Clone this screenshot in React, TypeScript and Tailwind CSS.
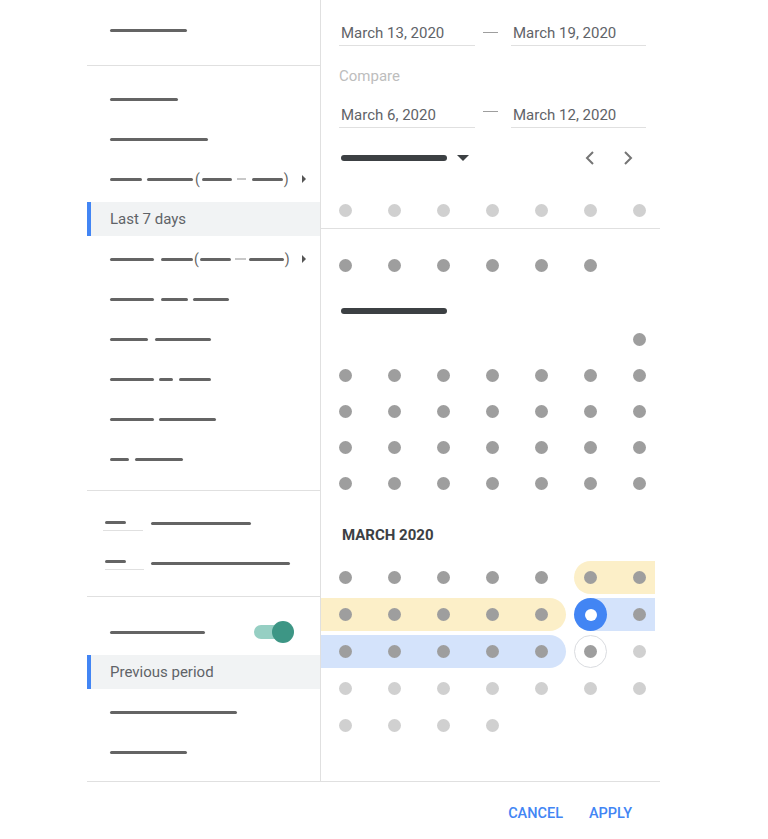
import React from "react";

type Kind = "dark" | "light" | "none" | "selected" | "today";

const yellow = "bg-[#fcefc8]";
const blue = "bg-[#d4e3fb]";

function Bar({ w }: { w: string }) {
  return <span className={`block h-[3px] shrink-0 rounded-full bg-[#646464] ${w}`} />;
}

function Paren({ children, cls = "" }: { children: React.ReactNode; cls?: string }) {
  return <span className={`text-[14px] leading-none text-[#646464] ${cls}`}>{children}</span>;
}

function Dash({ cls }: { cls: string }) {
  return <span className={`block h-[2px] shrink-0 bg-[#c8c8c8] ${cls}`} />;
}

function Arrow() {
  return (
    <span className="ml-auto block h-0 w-0 border-y-[4px] border-l-[4px] border-y-transparent border-l-[#555]" />
  );
}

function Row({ children, cls = "" }: { children: React.ReactNode; cls?: string }) {
  return <div className={`flex h-10 items-center pl-[23px] pr-[14px] ${cls}`}>{children}</div>;
}

function Selected({ label }: { label: string }) {
  return (
    <div className="my-[3px] flex h-[34px] items-center border-l-[4px] border-[#4285f4] bg-[#f1f3f4] pl-[19px] text-[15px] text-[#5f6368]">
      {label}
    </div>
  );
}

function DateField({ label, w }: { label: string; w: string }) {
  return (
    <div
      className={`flex h-[24px] items-center border-b border-[#e0e0e0] pl-[2px] text-[15px] text-[#5f6368] ${w}`}
    >
      {label}
    </div>
  );
}

function Cell({ kind = "dark", band }: { kind?: Kind; band?: string }) {
  return (
    <div className="relative flex h-full items-center justify-center">
      {band && <span className={`absolute inset-y-[2px] ${band}`} />}
      {kind === "dark" && <span className="relative h-[13px] w-[13px] rounded-full bg-[#9e9e9e]" />}
      {kind === "light" && <span className="relative h-[13px] w-[13px] rounded-full bg-[#d0d0d0]" />}
      {kind === "selected" && (
        <span className="relative flex h-[33px] w-[33px] items-center justify-center rounded-full bg-[#4285f4]">
          <span className="h-[12px] w-[12px] rounded-full bg-white" />
        </span>
      )}
      {kind === "today" && (
        <span className="relative flex h-[33px] w-[33px] items-center justify-center rounded-full border border-[#dadce0] bg-white">
          <span className="h-[13px] w-[13px] rounded-full bg-[#9e9e9e]" />
        </span>
      )}
    </div>
  );
}

function Week({ cells, h = "h-[36px]" }: { cells: { kind?: Kind; band?: string }[]; h?: string }) {
  return (
    <div className={`grid grid-cols-[repeat(7,49px)] ${h}`}>
      {cells.map((c, i) => (
        <Cell key={i} kind={c.kind} band={c.band} />
      ))}
    </div>
  );
}

const full = (kind: Kind) => Array.from({ length: 7 }, () => ({ kind }));

function Chevron({ dir }: { dir: "left" | "right" }) {
  return (
    <svg width="12" height="14" viewBox="0 0 12 14" fill="none" stroke="#757575" strokeWidth="2">
      {dir === "left" ? <polyline points="9,1 3,7 9,13" /> : <polyline points="3,1 9,7 3,13" />}
    </svg>
  );
}

export default function App() {
  return (
    <div className="min-h-[839px] bg-white font-[Roboto,Arial,sans-serif]">
      <div className="ml-[87px] w-[573px]">
        <div className="flex">
          {/* presets */}
          <aside className="w-[234px] shrink-0 border-r border-[#e0e0e0]">
            <div className="h-[66px] border-b border-[#e0e0e0] pt-[10px]">
              <Row cls="pl-[22px]">
                <Bar w="w-[77px]" />
              </Row>
            </div>

            <div className="h-[425px] border-b border-[#e0e0e0] pt-[13px]">
              <Row>
                <Bar w="w-[68px]" />
              </Row>
              <Row>
                <Bar w="w-[98px]" />
              </Row>
              <Row>
                <Bar w="w-[32px]" />
                <Bar w="w-[46px] ml-[5px]" />
                <Paren cls="ml-[2px]">(</Paren>
                <Bar w="w-[30px] ml-[2px]" />
                <Dash cls="w-[9px] ml-[5px]" />
                <Bar w="w-[31px] ml-[6px]" />
                <Paren cls="ml-[1px]">)</Paren>
                <Arrow />
              </Row>
              <Selected label="Last 7 days" />
              <Row>
                <Bar w="w-[44px]" />
                <Bar w="w-[32px] ml-[7px]" />
                <Paren cls="ml-[1px]">(</Paren>
                <Bar w="w-[31px] ml-[1px]" />
                <Dash cls="w-[11px] ml-[4px]" />
                <Bar w="w-[35px] ml-[3px]" />
                <Paren cls="ml-[1px]">)</Paren>
                <Arrow />
              </Row>
              <Row>
                <Bar w="w-[44px]" />
                <Bar w="w-[27px] ml-[7px]" />
                <Bar w="w-[36px] ml-[5px]" />
              </Row>
              <Row>
                <Bar w="w-[38px]" />
                <Bar w="w-[56px] ml-[7px]" />
              </Row>
              <Row>
                <Bar w="w-[44px]" />
                <Bar w="w-[14px] ml-[5px]" />
                <Bar w="w-[32px] ml-[6px]" />
              </Row>
              <Row>
                <Bar w="w-[44px]" />
                <Bar w="w-[57px] ml-[5px]" />
              </Row>
              <Row>
                <Bar w="w-[19px]" />
                <Bar w="w-[48px] ml-[6px]" />
              </Row>
            </div>

            <div className="h-[106px] border-b border-[#e0e0e0] pt-[12px]">
              <div className="flex h-10 items-center pl-[16px]">
                <div className="w-[40px] border-b border-[#e0e0e0] py-[6px] pl-[2px]">
                  <Bar w="w-[21px]" />
                </div>
                <Bar w="w-[100px] ml-[8px]" />
              </div>
              <div className="flex h-10 items-center pl-[18px]">
                <div className="w-[39px] border-b border-[#e0e0e0] pb-[6px] pt-[4px]">
                  <Bar w="w-[21px]" />
                </div>
                <Bar w="w-[139px] ml-[7px]" />
              </div>
            </div>

            <div className="h-[184px] pt-[15px]">
              <Row>
                <Bar w="w-[95px]" />
                <div className="relative ml-[49px] h-[14px] w-[38px] rounded-full bg-[#96cfc3]">
                  <span className="absolute -right-[2px] -top-[4px] h-[22px] w-[22px] rounded-full bg-[#3d9685]" />
                </div>
              </Row>
              <Selected label="Previous period" />
              <Row>
                <Bar w="w-[127px]" />
              </Row>
              <Row>
                <Bar w="w-[77px]" />
              </Row>
            </div>
          </aside>

          {/* calendar */}
          <section className="w-[339px]">
            <div className="pl-[18px] pt-[22px]">
              <div className="flex items-start">
                <DateField label="March 13, 2020" w="w-[136px]" />
                <span className="ml-[8px] mr-[13px] mt-[10px] block h-px w-[15px] bg-[#9e9e9e]" />
                <DateField label="March 19, 2020" w="w-[135px]" />
              </div>
              <div className="mt-[20px] h-[20px] text-[15px] leading-[20px] text-[#bdbdbd]">Compare</div>
              <div className="mt-[18px] flex items-start">
                <DateField label="March 6, 2020" w="w-[136px]" />
                <span className="ml-[8px] mr-[13px] mt-[7px] block h-px w-[15px] bg-[#9e9e9e]" />
                <DateField label="March 12, 2020" w="w-[135px]" />
              </div>
            </div>

            <div className="mt-[18px] flex h-[24px] items-center pl-[20px] pr-[26px]">
              <span className="block h-[6px] w-[106px] rounded-full bg-[#3c4043]" />
              <span className="ml-[10px] block h-0 w-0 border-x-[6px] border-t-[6px] border-x-transparent border-t-[#3c4043]" />
              <div className="ml-auto flex items-center gap-[26px]">
                <Chevron dir="left" />
                <Chevron dir="right" />
              </div>
            </div>

            <div className="mt-[22px] h-[37px] border-b border-[#e0e0e0]">
              <div className="w-[334px] overflow-hidden">
                <Week cells={full("light")} />
              </div>
            </div>

            <div className="w-[334px] overflow-hidden pt-[18px]">
              <Week cells={[...Array.from({ length: 6 }, () => ({ kind: "dark" as Kind })), { kind: "none" }]} />
              <div className="flex h-[38px] items-end pb-[7px] pl-[20px]">
                <span className="block h-[6px] w-[106px] rounded-full bg-[#3c4043]" />
              </div>
              <Week cells={[...Array.from({ length: 6 }, () => ({ kind: "none" as Kind })), { kind: "dark" }]} />
              <Week cells={full("dark")} />
              <Week cells={full("dark")} />
              <Week cells={full("dark")} />
              <Week cells={full("dark")} />

              <div className="pb-[14px] pl-[21px] pt-[24px] text-[15px] font-bold leading-[20px] text-[#3c4043]">
                MARCH 2020
              </div>

              <Week
                h="h-[37px]"
                cells={[
                  { kind: "dark" },
                  { kind: "dark" },
                  { kind: "dark" },
                  { kind: "dark" },
                  { kind: "dark" },
                  { kind: "dark", band: `left-[8px] right-0 rounded-l-full ${yellow}` },
                  { kind: "dark", band: `inset-x-0 ${yellow}` },
                ]}
              />
              <Week
                h="h-[37px]"
                cells={[
                  { kind: "dark", band: `inset-x-0 ${yellow}` },
                  { kind: "dark", band: `inset-x-0 ${yellow}` },
                  { kind: "dark", band: `inset-x-0 ${yellow}` },
                  { kind: "dark", band: `inset-x-0 ${yellow}` },
                  { kind: "dark", band: `inset-x-0 rounded-r-full ${yellow}` },
                  { kind: "selected", band: `left-1/2 right-0 ${blue}` },
                  { kind: "dark", band: `inset-x-0 ${blue}` },
                ]}
              />
              <Week
                h="h-[37px]"
                cells={[
                  { kind: "dark", band: `inset-x-0 ${blue}` },
                  { kind: "dark", band: `inset-x-0 ${blue}` },
                  { kind: "dark", band: `inset-x-0 ${blue}` },
                  { kind: "dark", band: `inset-x-0 ${blue}` },
                  { kind: "dark", band: `inset-x-0 rounded-r-full ${blue}` },
                  { kind: "today" },
                  { kind: "light" },
                ]}
              />
              <Week h="h-[37px]" cells={full("light")} />
              <Week
                h="h-[37px]"
                cells={[
                  ...Array.from({ length: 4 }, () => ({ kind: "light" as Kind })),
                  { kind: "none" },
                  { kind: "none" },
                  { kind: "none" },
                ]}
              />
            </div>
          </section>
        </div>

        <footer className="flex h-[58px] items-start justify-end gap-[26px] border-t border-[#e0e0e0] pr-[28px] pt-[22px] text-[14.5px] font-medium leading-[20px] text-[#4285f4]">
          <button type="button">CANCEL</button>
          <button type="button">APPLY</button>
        </footer>
      </div>
    </div>
  );
}
